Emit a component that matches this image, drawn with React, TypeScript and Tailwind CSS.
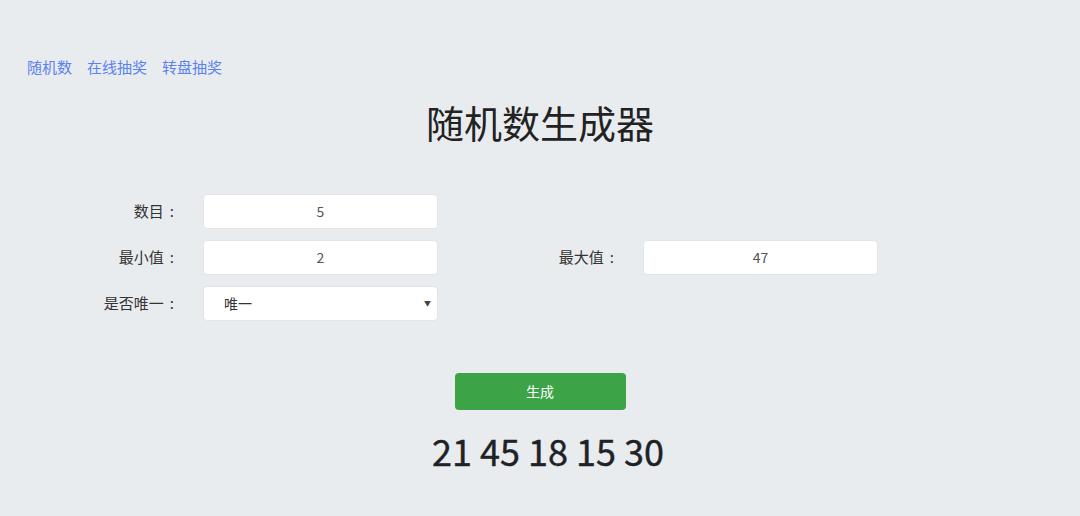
import React from 'react';

const font = { fontFamily: '"Noto Sans CJK SC", "Noto Sans", sans-serif' };

const Field: React.FC<{ value: string }> = ({ value }) => (
  <div className="h-[35px] bg-white border border-[#e1e4e8] rounded-[4px] flex items-center justify-center text-[14px] text-[#555]">
    {value}
  </div>
);

const Label: React.FC<{ text: string }> = ({ text }) => (
  <div className="h-[35px] flex items-center justify-end pr-[29px] text-[15px] text-[#333]">
    {text}
    <span className="ml-[6px]">:</span>
  </div>
);

export default function App() {
  return (
    <div className="w-[1080px] h-[516px] bg-[#e9ecef] overflow-hidden" style={font}>
      <div className="pt-[56px] pl-[27px] flex gap-[15px] text-[15px] text-[#5b82ee] leading-[22px]">
        <a>随机数</a>
        <a>在线抽奖</a>
        <a>转盘抽奖</a>
      </div>

      <h1 className="mt-[20px] text-center text-[38px] leading-[48px] text-[#222]">随机数生成器</h1>

      <div className="mt-[48px] grid grid-cols-[203px_235px_205px_235px] gap-y-[11px]">
        <Label text="数目" />
        <Field value="5" />
        <div />
        <div />

        <Label text="最小值" />
        <Field value="2" />
        <Label text="最大值" />
        <Field value="47" />

        <Label text="是否唯一" />
        <div className="relative h-[35px] bg-white border border-[#e1e4e8] rounded-[4px] flex items-center pl-[20px] text-[14px] text-[#333]">
          唯一
          <span className="absolute right-[6px] top-[11px] text-[7px] text-[#444]">▼</span>
        </div>
        <div />
        <div />
      </div>

      <div className="mt-[52px] flex justify-center">
        <button className="w-[171px] h-[37px] bg-[#3ca446] rounded-[4px] text-white text-[14px]">生成</button>
      </div>

      <div className="mt-[18px] pl-[16px] text-center text-[36px] leading-[44px] text-[#1e2226] [-webkit-text-stroke:0.4px_#1e2226]">
        21 45 18 15 30
      </div>
    </div>
  );
}
